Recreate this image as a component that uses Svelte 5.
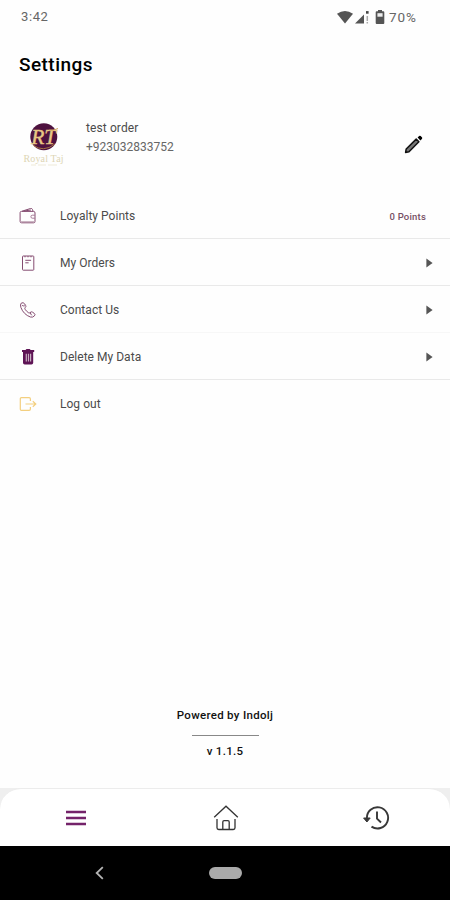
<script>
  const rows = [
    { icon: 'wallet', label: 'Loyalty Points' },
    { icon: 'orders', label: 'My Orders', arrow: true },
    { icon: 'phone', label: 'Contact Us', arrow: true, faint: true },
    { icon: 'trash', label: 'Delete My Data', arrow: true },
    { icon: 'logout', label: 'Log out', last: true }
  ];
</script>

<div class="screen">
  <header class="status">
    <span class="time">3:42</span>
    <div class="indicators">
      <svg class="wifi" width="18" height="14" viewBox="0 0 18 14"><path d="M1 3.8Q9-2 17 3.8L9 13.6Z" fill="#555" /></svg>
      <svg class="signal" width="15" height="14" viewBox="0 0 15 14">
        <path d="M0 13.5 9 4.5V13.5Z" fill="#555" />
        <path d="M11 1.1h2.6v2.6H11z" fill="#444" /><path d="M12.3 6v5M12.3 12v1.5" stroke="#aaa" stroke-width="1.5" />
      </svg>
      <svg class="battery" width="10" height="16" viewBox="0 0 10 16">
        <path d="M3 1h4v1.3h1.3q1 0 1 1V14q0 1-1 1H1.7q-1 0-1-1V3.3q0-1 1-1H3z" fill="#555" />
        <path d="M2.4 4.2h5.2v3.5H2.4z" fill="#eee" />
      </svg>
      <span class="percent">70%</span>
    </div>
  </header>

  <h1>Settings</h1>

  <section class="profile">
    <svg class="logo" width="46" height="48" viewBox="0 0 46 48">
      <circle cx="21.8" cy="15.8" r="13.5" fill="#4e123f" />
      <path d="M11 24Q21 32 33 23" fill="none" stroke="#b58845" stroke-width=".8" />
      <text x="9.2" y="22.5" textLength="25" lengthAdjust="spacingAndGlyphs" font-family="Liberation Serif, serif" font-size="20" font-style="italic" fill="#e8c785" stroke="#e8c785" stroke-width=".4">RT</text>
      <path d="M27 9.2Q31 10 36 7.5" fill="none" stroke="#cfa35d" />
      <text x="1.5" y="41" textLength="40" font-family="Liberation Serif, serif" font-size="10" fill="#ddd5b4">Royal Taj</text>
      <path d="M9 44h5m2 0h8m2 0h9" stroke="#eee9d7" stroke-width="1.2" />
    </svg>
    <div class="person">
      <span class="name">test order</span>
      <span class="number">+923032833752</span>
    </div>
    <svg class="edit" width="20" height="20" viewBox="0 0 20 20">
      <path d="M1.6 18.4 2.2 15 12.2 5.1 14.9 7.8 5 17.8Z" fill="#777" stroke="#111" stroke-width="1.5" stroke-linejoin="round" />
      <path d="m13.6 3.6 1.5-1.5q.8-.7 1.6 0l1.2 1.2q.8.8 0 1.6l-1.5 1.5Z" fill="#000" />
    </svg>
  </section>

  <nav class="menu">
    {#each rows as row}
      <div class="row" class:faint={row.faint} class:last={row.last}>
        <svg class="icon" width="18" height="18" viewBox="0 0 18 18" fill="none" stroke="#854c71" stroke-width="1">
          {#if row.icon === 'wallet'}
            <path d="M2.5 4.4h12q1.5 0 1.5 1.5v8.6q0 1.3-1.3 1.3H2.5q-1.4 0-1.4-1.4V5.6q0-1.2 1.4-1.2ZM3 4.2l8.5-2.7q1.5-.4 2 1l.5 1.8M5 4l7-1" />
            <path d="M16 8.2h-2.7q-1.4 0-1.4 1.5t1.4 1.5H16" stroke="#a77b98" /><path d="M1.5 14.7h14" stroke="#c1a4b6" />
          {:else if row.icon === 'orders'}
            <rect x="3.5" y="2" width="11.3" height="14.2" rx=".7" /><path d="M6 2v1.3M9 2v1.3M12 2v1.3M6.3 6.3h5.8M6.3 8.8h3.3" />
          {:else if row.icon === 'phone'}
            <path d="M2.2 2.2q2-1.4 3.5.7l1 1.7q.6 1-.4 1.8-.9.8-.2 1.9 1.4 2.2 3.5 3.5 1 .5 1.8-.4.9-1 2-.3l1.8 1.2q1.5 1.2.2 2.6-1.5 1.8-4 1.1Q4.7 13.6 1.9 6.5 1 3.6 2.2 2.2ZM3.1 4.4q1 .8 2.7.4m5.5 6.3q.1 2.2 1.5 3.2" />
          {:else if row.icon === 'trash'}
            <path d="M3 2.1h3.5l1-1h3.2l1 1h3.5v2H3Z" fill="#5e1455" stroke="none" />
            <path d="M4 4h10.2v10.7q0 1.7-1.7 1.7H5.7Q4 16.4 4 14.7Z" fill="#5e1455" stroke="none" />
            <path d="M7.3 5.8v7.7M9.5 5.8v7.7M11.6 5.8v7.7" stroke="#c6adc0" stroke-width="1.2" />
          {:else}
            <path d="M11.4 6V4q0-1.3-1.3-1.3H2.4q-1.1 0-1.1 1.1v10.4q0 1.1 1.1 1.1h7.7q1.3 0 1.3-1.3v-2M6.5 9h10.3m-3-2.8L16.8 9l-3 2.8" stroke="#f3cf7f" stroke-width="1.2" />
          {/if}
        </svg>
        <span class="label">{row.label}</span>
        {#if row.arrow}
          <svg class="arrow" width="7" height="10" viewBox="0 0 7 10"><path d="M.4.6 6.6 5 .4 9.4Z" fill="#555" /></svg>
        {:else if row.icon === 'wallet'}
          <span class="points">0 Points</span>
        {/if}
      </div>
    {/each}
  </nav>

  <footer class="about">
    <span class="powered">Powered by Indolj</span>
    <div class="rule"></div>
    <span class="version">v 1.1.5</span>
  </footer>

  <div class="tabs-wrap">
    <nav class="tabs">
      <div class="tab">
        <svg width="22" height="18" viewBox="0 0 22 18"><path d="M1 3h20M1 9h20M1 15h20" stroke="#74236a" stroke-width="2.3" /></svg>
      </div>
      <div class="tab">
        <svg width="26" height="26" viewBox="0 0 26 26" fill="none" stroke="#333" stroke-width="1.3">
          <path d="M1.2 12.3 13 1.2 24.8 12.3" />
          <path d="M4 14v8.8q0 1.7 1.7 1.7h14.6q1.7 0 1.7-1.7V14M9.8 24.5v-7.6q0-1.3 1.3-1.3h3.8q1.3 0 1.3 1.3v7.6" />
        </svg>
      </div>
      <div class="tab">
        <svg class="history" width="28" height="26" viewBox="0 0 28 26" fill="none" stroke="#383838" stroke-width="1.9">
          <path d="M4.9 13.2A10.6 10.6 0 1 1 9.5 21.6" /><path d="M1.6 13h6.6l-3.3 4Z" fill="#383838" stroke-width="1" /><path d="M15 6.5v7.2l4 3.8" />
        </svg>
      </div>
    </nav>
  </div>
  <div class="system">
    <div class="slot"><svg width="9" height="14" viewBox="0 0 9 14"><path d="M7.8 1.2 1.7 7l6.1 5.8" fill="none" stroke="#b5b5b5" stroke-width="1.8" /></svg></div>
    <div class="slot"><div class="pill"></div></div>
    <div class="slot"></div>
  </div>
</div>

<style>
  :global(body) { margin: 0; background: #fff; }
  .screen {
    width: 450px; height: 900px; display: flex; flex-direction: column;
    box-sizing: border-box; overflow: hidden; background: #fefefe;
    font-family: Roboto, sans-serif; color: #4b4b4b;
  }
  svg { display: block; flex-shrink: 0; }
  .status { height: 33px; display: flex; align-items: center; justify-content: space-between; padding: 0 32px 0 21px; box-sizing: border-box; font-size: 13px; color: #666; }
  .time { letter-spacing: .6px; }
  .indicators { display: flex; align-items: center; }
  .signal { margin-left: 1px; }
  .battery { margin-left: 5px; }
  .percent { margin-left: 4px; width: 29px; font-size: 13.5px; letter-spacing: .9px; white-space: nowrap; }
  h1 { margin: 0; height: 64px; line-height: 64px; padding-left: 19px; font-size: 19px; font-weight: 500; letter-spacing: .45px; color: #000; }
  .profile { height: 95px; display: flex; align-items: center; padding: 0 26px 0 22px; box-sizing: border-box; }
  .logo { margin-top: 0; }
  .person { display: flex; flex-direction: column; flex: 1; margin: -13px 0 0 18px; font-size: 12px; line-height: 19px; }
  .name { letter-spacing: .1px; }
  .number { letter-spacing: 0; color: #666; }
  .edit { margin-top: -1px; }
  .menu { display: flex; flex-direction: column; }
  .row { height: 47.1px; box-sizing: border-box; display: flex; align-items: center; padding: 2px 17px 0 19px; border-bottom: 1px solid #e9e9e9; font-size: 12px; }
  .row.faint { border-color: #f7f7f7; }
  .row.last { border-color: transparent; }
  .label { flex: 1; margin-left: 23px; letter-spacing: .03px; }
  .points { margin-right: 7px; font-size: 9.5px; letter-spacing: .2px; font-weight: 500; color: #775064; }
  .about { margin-top: auto; display: flex; flex-direction: column; align-items: center; color: #111; font-weight: 500; font-size: 11.5px; line-height: 16px; padding-bottom: 29px; }
  .powered { letter-spacing: .3px; }
  .rule { width: 67px; height: 1px; margin: 12px 0 7px; background: #888; }
  .version { letter-spacing: .3px; }
  .tabs-wrap { height: 58px; flex-shrink: 0; background: #efefef; }
  .tabs { height: 58px; box-sizing: border-box; display: flex; border-top: 1px solid #ececec; border-radius: 21px 21px 0 0; background: #fff; }
  .tab, .slot { flex: 1; display: flex; align-items: center; justify-content: center; }
  .tab svg { margin-left: 1px; }
  .tab .history { margin-left: 2px; }
  .system { height: 54px; flex-shrink: 0; background: #000; display: flex; }
  .slot:first-child { padding-left: 37px; }
  .slot:last-child { padding-right: 37px; }
  .pill { width: 33px; height: 12px; border-radius: 6px; background: #aaa; margin-left: 1px; }
</style>
